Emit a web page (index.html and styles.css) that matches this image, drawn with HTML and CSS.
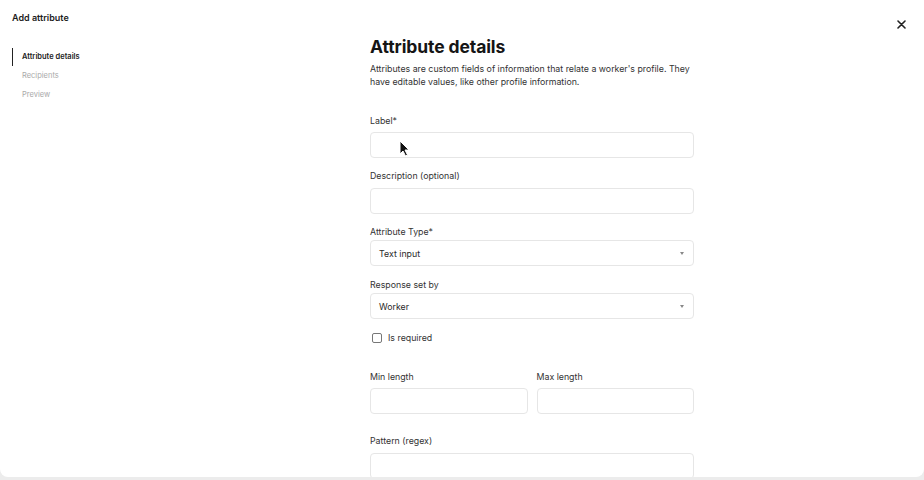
FILE: index.html
```html
<!DOCTYPE html>
<html lang="en">

<head>
      <meta charset="UTF-8">
      <meta name="viewport" content="width=device-width, initial-scale=1.0">
      <title>Add attribute</title>
      <link rel="stylesheet" href="styles.css">
</head>

<body>
      <div class="panel">
            <div class="header">
                  <h1 class="title">Add attribute</h1>
                  <button class="close" aria-label="Close">
                        <svg width="9" height="9" viewBox="0 0 9 9">
                              <path d="M1 1 L8 8 M8 1 L1 8" stroke="#222" stroke-width="1.6" stroke-linecap="round" />
                        </svg>
                  </button>
            </div>
            <div class="content">
                  <ul class="steps">
                        <li class="step active">Attribute details</li>
                        <li class="step">Recipients</li>
                        <li class="step">Preview</li>
                  </ul>
                  <div class="main">
                        <form class="form">
                              <h2 class="heading">Attribute details</h2>
                              <p class="intro">Attributes are custom fields of information that relate a worker's profile. They have editable values, like other profile information.</p>

                              <div class="field first">
                                    <label class="label">Label*</label>
                                    <div class="input"></div>
                                    <!-- mouse pointer from the capture -->
                                    <svg class="pointer" width="11" height="17" viewBox="0 0 11 17">
                                          <path d="M1 1 L1 14 L4 11 L6.5 16 L8.5 15 L6 10 L10 10 Z" fill="#111" stroke="#fff" stroke-width="1" stroke-linejoin="round" />
                                    </svg>
                              </div>

                              <div class="field">
                                    <label class="label">Description (optional)</label>
                                    <div class="input"></div>
                              </div>

                              <div class="field select-field">
                                    <label class="label">Attribute Type*</label>
                                    <div class="input select">
                                          <span>Text input</span>
                                          <span class="caret"></span>
                                    </div>
                              </div>

                              <div class="field select-field">
                                    <label class="label">Response set by</label>
                                    <div class="input select">
                                          <span>Worker</span>
                                          <span class="caret"></span>
                                    </div>
                              </div>

                              <div class="check">
                                    <span class="box"></span>
                                    <span>Is required</span>
                              </div>

                              <div class="row">
                                    <div class="field">
                                          <label class="label">Min length</label>
                                          <div class="input"></div>
                                    </div>
                                    <div class="field">
                                          <label class="label">Max length</label>
                                          <div class="input"></div>
                                    </div>
                              </div>

                              <div class="field pattern">
                                    <label class="label">Pattern (regex)</label>
                                    <div class="input"></div>
                              </div>
                        </form>
                  </div>
            </div>
      </div>
</body>

</html>
```

FILE: styles.css
```css
* {
      box-sizing: border-box;
      font-family: Inter, "Noto Sans", sans-serif;
}

body {
      margin: 0;
      padding: 0;
      height: 480px;
      overflow: hidden;
      background-color: #ececec;
}

.panel {
      height: 477px;
      background-color: #fff;
      border-radius: 0 0 8px 8px;
      overflow: hidden;
}

.header {
      height: 35px;
      display: flex;
      justify-content: space-between;
      align-items: flex-start;
      padding: 12px 18px 0 12px;
}

.title {
      margin: 0;
      font-size: 9px;
      line-height: 12px;
      font-weight: 600;
      color: #1c1c1c;
}

.close {
      border: none;
      background: none;
      padding: 0;
      margin-top: 8px;
      width: 9px;
      height: 9px;
      display: flex;
}

.content {
      display: flex;
}

.steps {
      width: 140px;
      list-style: none;
      margin: 0;
      padding: 13px 0 0 12px;
      display: flex;
      flex-direction: column;
      gap: 1px;
}

.step {
      font-size: 7.5px;
      line-height: 18px;
      padding-left: 9px;
      color: #a9a9a9;
      border-left: 1.5px solid transparent;
}

.step.active {
      color: #1c1c1c;
      font-weight: 600;
      border-left-color: #222;
}

.main {
      flex: 1;
      display: flex;
      justify-content: center;
}

.form {
      width: 324px;
      margin: 0;
      padding-top: 1px;
}

.heading {
      margin: 0;
      font-size: 17.5px;
      line-height: 22px;
      font-weight: 700;
      color: #151515;
      letter-spacing: -0.1px;
}

.intro {
      margin: 4px 0 27px;
      font-size: 8.8px;
      line-height: 13px;
      color: #333;
}

.field {
      display: flex;
      flex-direction: column;
      gap: 6px;
      margin-bottom: 12px;
}

.field.first {
      position: relative;
      gap: 5px;
}

.select-field {
      gap: 2px;
      margin-bottom: 13px;
}

.label {
      font-size: 8.8px;
      line-height: 12px;
      color: #333;
}

.input {
      height: 26px;
      border: 1px solid #e6e6e6;
      border-radius: 4px;
      background-color: #fff;
}

.select {
      display: flex;
      justify-content: space-between;
      align-items: center;
      padding: 0 9px 0 8px;
      font-size: 8.8px;
      color: #2a2a2a;
}

.caret {
      width: 0;
      height: 0;
      border-left: 2.5px solid transparent;
      border-right: 2.5px solid transparent;
      border-top: 3px solid #888;
}

.pointer {
      position: absolute;
      left: 29px;
      top: 25px;
}

.check {
      display: flex;
      align-items: center;
      gap: 6px;
      padding-left: 2px;
      margin: 12px 0 27px;
      font-size: 8.8px;
      line-height: 12px;
      color: #333;
}

.box {
      width: 10px;
      height: 10px;
      border: 1px solid #777;
      border-radius: 2px;
}

.row {
      display: grid;
      grid-template-columns: 1fr 1fr;
      gap: 9px;
}

.row .field {
      gap: 5px;
      margin-bottom: 21px;
}
```
